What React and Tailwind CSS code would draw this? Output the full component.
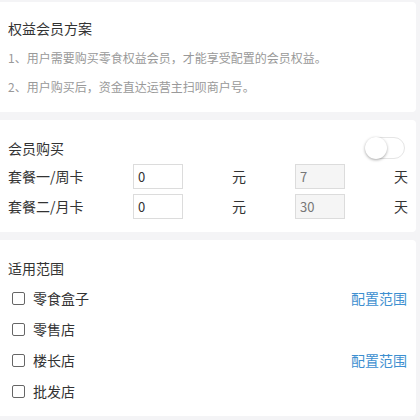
import React, { useState } from 'react';

const plans = [
  { name: '套餐一/周卡', price: '0', days: '7' },
  { name: '套餐二/月卡', price: '0', days: '30' },
];

const scopes = [
  { name: '零食盒子', config: true },
  { name: '零售店', config: false },
  { name: '楼长店', config: true },
  { name: '批发店', config: false },
];

const App = () => {
  const [enabled, setEnabled] = useState(false);
  const [checked, setChecked] = useState({});

  return (
    <div className="min-h-screen bg-[#f4f4f6] pt-[2px] pr-[4px] text-[#333] font-['Noto_Sans_CJK_SC',sans-serif]">
      {/* 方案说明 */}
      <div className="h-[110px] bg-white rounded-r-[4px] px-[8px] pt-[16px]">
        <div className="h-[20px] leading-[20px] text-[14px]">权益会员方案</div>
        <p className="mt-[10px] h-[20px] leading-[20px] text-[12px] text-[#999]">1、用户需要购买零食权益会员，才能享受配置的会员权益。</p>
        <p className="mt-[9px] h-[20px] leading-[20px] text-[12px] text-[#999]">2、用户购买后，资金直达运营主扫呗商户号。</p>
      </div>

      {/* 会员购买 */}
      <div className="mt-[8px] h-[112px] bg-white rounded-r-[4px] pl-[8px] pr-[8px] pt-[16px]">
        <div className="h-[24px] flex items-center justify-between">
          <span className="text-[14px]">会员购买</span>
          <button
            onClick={() => setEnabled(!enabled)}
            className={`relative mr-[3px] w-[40px] h-[22px] rounded-full border ${enabled ? 'bg-[#4cd964] border-[#4cd964]' : 'bg-white border-[#e5e5e5]'}`}
          >
            <span
              className={`absolute top-[-1px] w-[22px] h-[22px] rounded-full bg-white shadow-[0_1px_3px_rgba(0,0,0,0.35)] ${enabled ? 'left-[17px]' : 'left-[-1px]'}`}
            />
          </button>
        </div>
        <div className="mt-[4px] flex flex-col gap-[5px]">
          {plans.map((p) => (
            <div key={p.name} className="h-[25px] flex items-center text-[14px]">
              <span className="w-[125px]">{p.name}</span>
              <input
                defaultValue={p.price}
                className="w-[50px] h-[25px] border border-[#dcdcdc] px-[4px] text-[13px] text-[#333] outline-none"
              />
              <span className="w-[112px] text-center">元</span>
              <input
                value={p.days}
                disabled
                className="w-[50px] h-[25px] border border-[#dcdcdc] bg-[#f5f5f5] px-[4px] text-[13px] text-[#777]"
              />
              <span className="flex-1 text-right">天</span>
            </div>
          ))}
        </div>
      </div>

      {/* 适用范围 */}
      <div className="mt-[8px] h-[176px] bg-white rounded-r-[4px] pl-[8px] pr-[9px] pt-[16px]">
        <div className="h-[24px] flex items-center text-[14px]">适用范围</div>
        <div className="mt-[3px]">
          {scopes.map((s) => (
            <div key={s.name} className="h-[31px] flex items-center text-[14px]">
              <label className="flex items-center cursor-pointer">
                <span
                  onClick={() => setChecked({ ...checked, [s.name]: !checked[s.name] })}
                  className={`ml-[4px] w-[13px] h-[13px] rounded-[2px] border ${checked[s.name] ? 'bg-[#3c8dd0] border-[#3c8dd0]' : 'border-[#666] bg-white'}`}
                />
                <span className="ml-[8px]">{s.name}</span>
              </label>
              {s.config && <span className="ml-auto text-[#3d8fd0]">配置范围</span>}
            </div>
          ))}
        </div>
      </div>
    </div>
  );
};

export default App;
